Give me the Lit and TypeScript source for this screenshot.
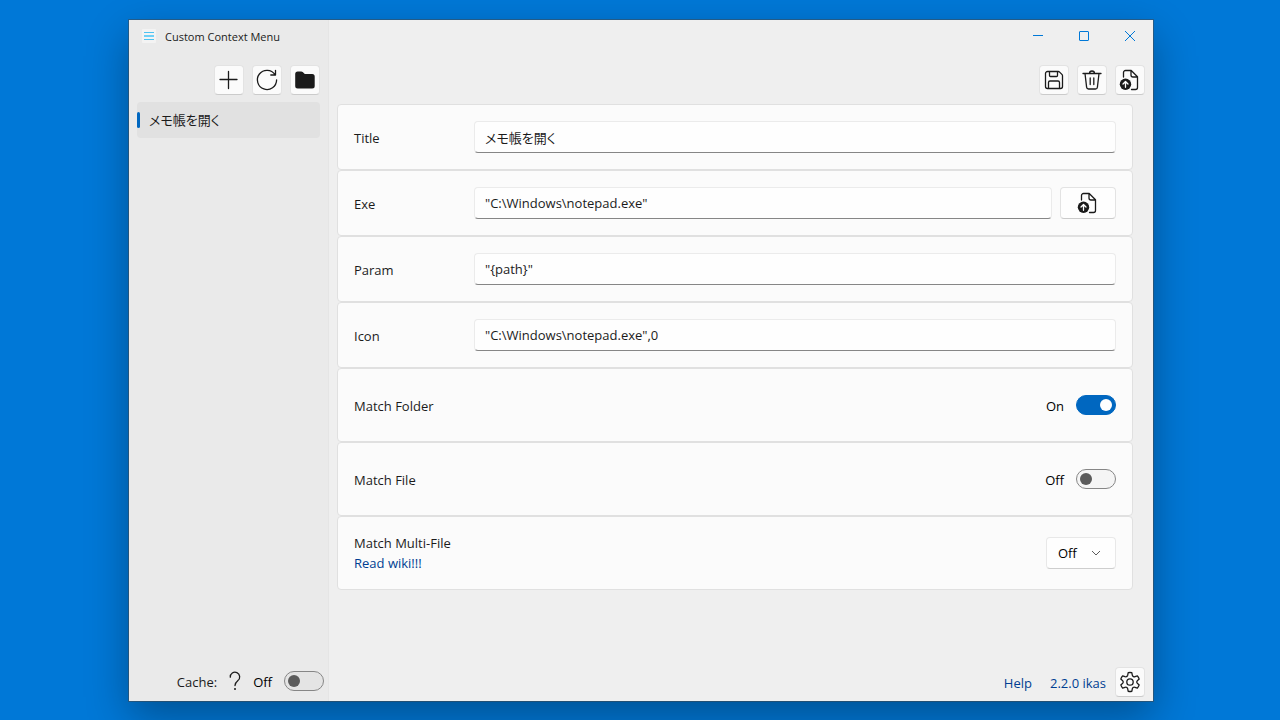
import { LitElement, html, css, svg } from "lit";
import { customElement, property, state } from "lit/decorators.js";

const stroke = (body: unknown, size = 24) => html`<svg class="icon" width=${size} height=${size} viewBox="0 0 24 24" aria-hidden="true">${body}</svg>`;

const icons = {
  add: stroke(svg`<path d="M11.500 3.500v17M3 11.500h17" />`),
  refresh: stroke(svg`<path d="M20 6.600A9.600 9.600 0 1 0 21.600 12M20.500 2.300v4.700h-4.700" />`),
  folder: stroke(svg`<path class="solid" d="M2.200 6A2.500 2.500 0 0 1 4.700 3.500h3.500c.6 0 1.100.2 1.500.6L11.800 6.100h7.400a2.500 2.500 0 0 1 2.500 2.500v9.400a2.500 2.500 0 0 1-2.500 2.500H4.700a2.500 2.500 0 0 1-2.500-2.500z" />`),
  save: stroke(svg`<path d="M5.500 3.500h10.700a2 2 0 0 1 1.400.6l2.300 2.300a2 2 0 0 1 .6 1.400v10.700a2 2 0 0 1-2 2h-13a2 2 0 0 1-2-2v-13a2 2 0 0 1 2-2zM7.500 3.500v4a1 1 0 0 0 1 1h6a1 1 0 0 0 1-1v-4M6.500 20.500v-6a1.500 1.500 0 0 1 1.500-1.500h8a1.500 1.500 0 0 1 1.500 1.500v6" />`),
  trash: stroke(svg`<path d="M3 5.500h18M9.500 5.500a2.500 2.500 0 0 1 5 0M5 5.500l1.600 13.700a2 2 0 0 0 2 1.800h6.800a2 2 0 0 0 2-1.800L19 5.500M10.200 10v6.500M13.800 10v6.500" />`),
  share: stroke(svg`<path d="M5.500 9V4.500a2 2 0 0 1 2-2h5.700L19.500 8.800v10.700a2 2 0 0 1-2 2h-4M13 2.500V7a2 2 0 0 0 2 2h4.500" /><circle class="solid" cx="7.500" cy="16.300" r="5.700" /><path class="light" d="M7.500 19.300v-5.500M5 16l2.500-2.500L10 16" />`),
  gear: stroke(svg`<circle cx="12" cy="12" r="3.200" /><path d="M10.200 2.700q1.800-.35 3.600 0l.5 2.500q.2 1 1.200 1.400.7.4 1.500.1l2.400-.8q1.200 1.400 1.800 3.200l-1.900 1.600q-1.200 1.300 0 2.600l1.900 1.600q-.6 1.800-1.800 3.200l-2.400-.8q-2.100-.5-2.700 1.500l-.5 2.500q-1.800.35-3.600 0l-.5-2.500q-.6-2-2.700-1.500l-2.400.8q-1.200-1.400-1.800-3.200l1.900-1.600q1.200-1.300 0-2.600L2.800 9.100q.6-1.800 1.800-3.200l2.400.8q2.100.5 2.700-1.500z" />`),
  help: stroke(svg`<path d="M7.300 8.200a4.700 4.700 0 1 1 7.600 3.400c-1.700 1.400-2.900 2.300-2.900 4.900" /><circle class="solid" cx="12" cy="20" r="1" />`),
};

@customElement("toggle-switch")
export class ToggleSwitch extends LitElement {
  static styles = css`
    :host { display: block; }
    .switch { display: flex; align-items: center; gap: 12px; color: #000; cursor: pointer; }
    .text { padding-top: 2px; }
    .box {
      appearance: none; box-sizing: border-box; margin: 0; width: 40px; height: 20px; padding: 3px;
      border: 1px solid #868686; border-radius: 10px; background: rgba(0, 0, 0, 0.024);
    }
    .box::before { content: ""; display: block; width: 12px; height: 12px; border-radius: 50%; background: #5b5b5b; }
    .box:checked { background: #0067c0; border-color: #0067c0; }
    .box:checked::before { margin-left: auto; background: #fff; }
  `;
  @property({ type: Boolean }) on = false;
  @property() label = "";

  render() {
    return html`<label class="switch">
      <span class="text">${this.on ? "On" : "Off"}</span>
      <input class="box" type="checkbox" role="switch" aria-label=${this.label} .checked=${this.on}
        @change=${(e: Event) => (this.on = (e.target as HTMLInputElement).checked)} />
    </label>`;
  }
}

@customElement("app-root")
export class AppRoot extends LitElement {
  static styles = css`
    :host {
      display: flex; box-sizing: border-box; min-height: 100vh; padding: 20px 127px 19px 129px; overflow: hidden;
      background: #0078d7; color: #1b1b1b;
      font: 13px/20px "Open Sans", "Noto Sans CJK JP", sans-serif;
    }
    .window {
      flex: 1; min-width: 0; display: flex; background: #efefef;
      box-shadow: 0 0 0 1px rgba(70, 70, 70, 0.5), 0 16px 40px rgba(0, 0, 0, 0.32);
    }
    .side { flex: none; box-sizing: border-box; width: 200px; display: flex; flex-direction: column; background: #eaeaea; border-right: 1px solid #e5e5e5; }
    .main { flex: 1; min-width: 0; display: flex; flex-direction: column; }
    .brand { display: flex; align-items: center; gap: 9px; height: 32px; padding-left: 13px; font-size: 11px; }
    .text { padding-top: 2px; }
    .captions { display: flex; justify-content: flex-end; height: 32px; }
    .caption { width: 46px; padding: 0; border: 0; background: none; display: grid; place-items: center; }
    .caption svg { fill: none; stroke: #0078d7; }
    .tools { display: flex; justify-content: flex-end; gap: 8px; padding: 13px 8px 7px; }
    .tool {
      box-sizing: border-box; width: 30px; height: 30px; padding: 0; display: grid; place-items: center;
      color: inherit; background: #fbfbfb; border: 1px solid #e3e3e3; border-bottom-color: #cbcbcb; border-radius: 4px;
    }
    .wide { width: 56px; height: 32px; background: #fefefe; }
    .icon { display: block; fill: none; stroke: #1b1b1b; stroke-width: 1.3; stroke-linecap: round; stroke-linejoin: round; }
    .icon .solid { fill: #1b1b1b; stroke: none; }
    .icon .light { stroke: #fff; }
    .list { flex: 1; margin: 0; padding: 0 8px; list-style: none; }
    .entry {
      width: 100%; height: 36px; padding: 0; display: flex; align-items: center; gap: 9px; border: 0; border-radius: 4px;
      background: #e1e1e1; color: inherit; font: inherit; font-feature-settings: "palt";
    }
    .entry::before { content: ""; width: 3px; height: 16px; border-radius: 2px; background: #0067c0; }
    .cache { display: flex; align-items: center; justify-content: flex-end; height: 40px; padding-right: 4px; }
    .query { margin: 0 6px; padding: 0; border: 0; background: none; }
    .cards { flex: 1; padding: 2px 20px 0 8px; }
    .card {
      box-sizing: border-box; min-height: 66px; padding: 0 16px; display: flex; align-items: center; gap: 8px;
      background: #fbfbfb; border: 1px solid #e0e0e0; border-radius: 4px;
    }
    .tall { min-height: 74px; justify-content: space-between; }
    .name { flex: none; width: 112px; }
    .field {
      flex: 1; min-width: 0; box-sizing: border-box; height: 32px; padding: 0 10px; border: 1px solid #ebebeb;
      border-bottom-color: #868686; border-radius: 4px; background: #fefefe; color: #1b1b1b; font: inherit;
      font-feature-settings: "palt"; outline: none;
    }
    .link { color: #003e92; text-decoration: none; }
    .stack { display: grid; }
    .pick { display: grid; align-items: center; }
    .pick > * { grid-area: 1 / 1; }
    .select {
      appearance: none; width: 70px; height: 32px; padding: 0 11px; border: 1px solid #e8e8e8; border-bottom-color: #cecece;
      border-radius: 4px; background: #fefefe; color: #000; font: inherit;
    }
    .chevron { justify-self: end; margin-right: 15px; fill: none; stroke: #5c5c5c; pointer-events: none; }
    .foot { display: flex; align-items: center; justify-content: flex-end; padding: 0 8px 4px; }
    .foot .link { margin-right: 18px; }
    .foot .version { margin-right: 9px; }
  `;

  @state() private fields = [
    { id: "title", label: "Title", value: "メモ帳を開く" },
    { id: "exe", label: "Exe", value: '"C:\\Windows\\notepad.exe"' },
    { id: "param", label: "Param", value: '"{path}"' },
    { id: "icon", label: "Icon", value: '"C:\\Windows\\notepad.exe",0' },
  ];

  render() {
    return html`
      <div class="window">
        <aside class="side">
          <div class="brand">
            <svg width="14" height="14" viewBox="0 0 14 14" aria-hidden="true">
              <rect width="14" height="14" rx="1" fill="#f3f3f3" />
              <path d="M2 3.500h10M2 10.500h10" stroke="#4cc2f1" stroke-width="1.200" />
              <path d="M2 7h10" stroke="#6fd0f6" stroke-width="2" />
            </svg>
            <span class="text">Custom Context Menu</span>
          </div>
          <div class="tools">
            <button class="tool" aria-label="Add">${icons.add}</button>
            <button class="tool" aria-label="Refresh">${icons.refresh}</button>
            <button class="tool" aria-label="Open folder">${icons.folder}</button>
          </div>
          <ul class="list"><li><button class="entry">${this.fields[0].value}</button></li></ul>
          <div class="cache">
            <span class="text">Cache:</span>
            <button class="query" aria-label="About the cache">${icons.help}</button>
            <toggle-switch label="Cache"></toggle-switch>
          </div>
        </aside>
        <main class="main">
          <div class="captions">
            <button class="caption" aria-label="Minimize"><svg width="12" height="12"><path d="M1 5.500h10" /></svg></button>
            <button class="caption" aria-label="Maximize"><svg width="12" height="12"><rect x="1.500" y="1.500" width="9" height="9" rx="0.500" /></svg></button>
            <button class="caption" aria-label="Close"><svg width="12" height="12"><path d="M1 1l10 10M11 1L1 11" /></svg></button>
          </div>
          <div class="tools">
            <button class="tool" aria-label="Save">${icons.save}</button>
            <button class="tool" aria-label="Delete">${icons.trash}</button>
            <button class="tool" aria-label="Share">${icons.share}</button>
          </div>
          <div class="cards">
            ${this.fields.map((f) => html`
              <div class="card">
                <label class="name text" for=${f.id}>${f.label}</label>
                <input class="field" id=${f.id} type="text" spellcheck="false" .value=${f.value} />
                ${f.id === "exe" ? html`<button class="tool wide" aria-label="Browse">${icons.share}</button>` : ""}
              </div>`)}
            <div class="card tall"><span class="text">Match Folder</span><toggle-switch label="Match Folder" on></toggle-switch></div>
            <div class="card tall"><span class="text">Match File</span><toggle-switch label="Match File"></toggle-switch></div>
            <div class="card tall">
              <div class="stack"><label for="multi">Match Multi-File</label><a class="link" href="#wiki">Read wiki!!!</a></div>
              <div class="pick">
                <select class="select" id="multi"><option>Off</option></select>
                <svg class="chevron" width="10" height="10"><path d="M1 3l4 4 4-4" /></svg>
              </div>
            </div>
          </div>
          <footer class="foot">
            <a class="link text" href="#help">Help</a>
            <a class="link text version" href="#version">2.2.0 ikas</a>
            <button class="tool" aria-label="Settings">${icons.gear}</button>
          </footer>
        </main>
      </div>`;
  }
}
